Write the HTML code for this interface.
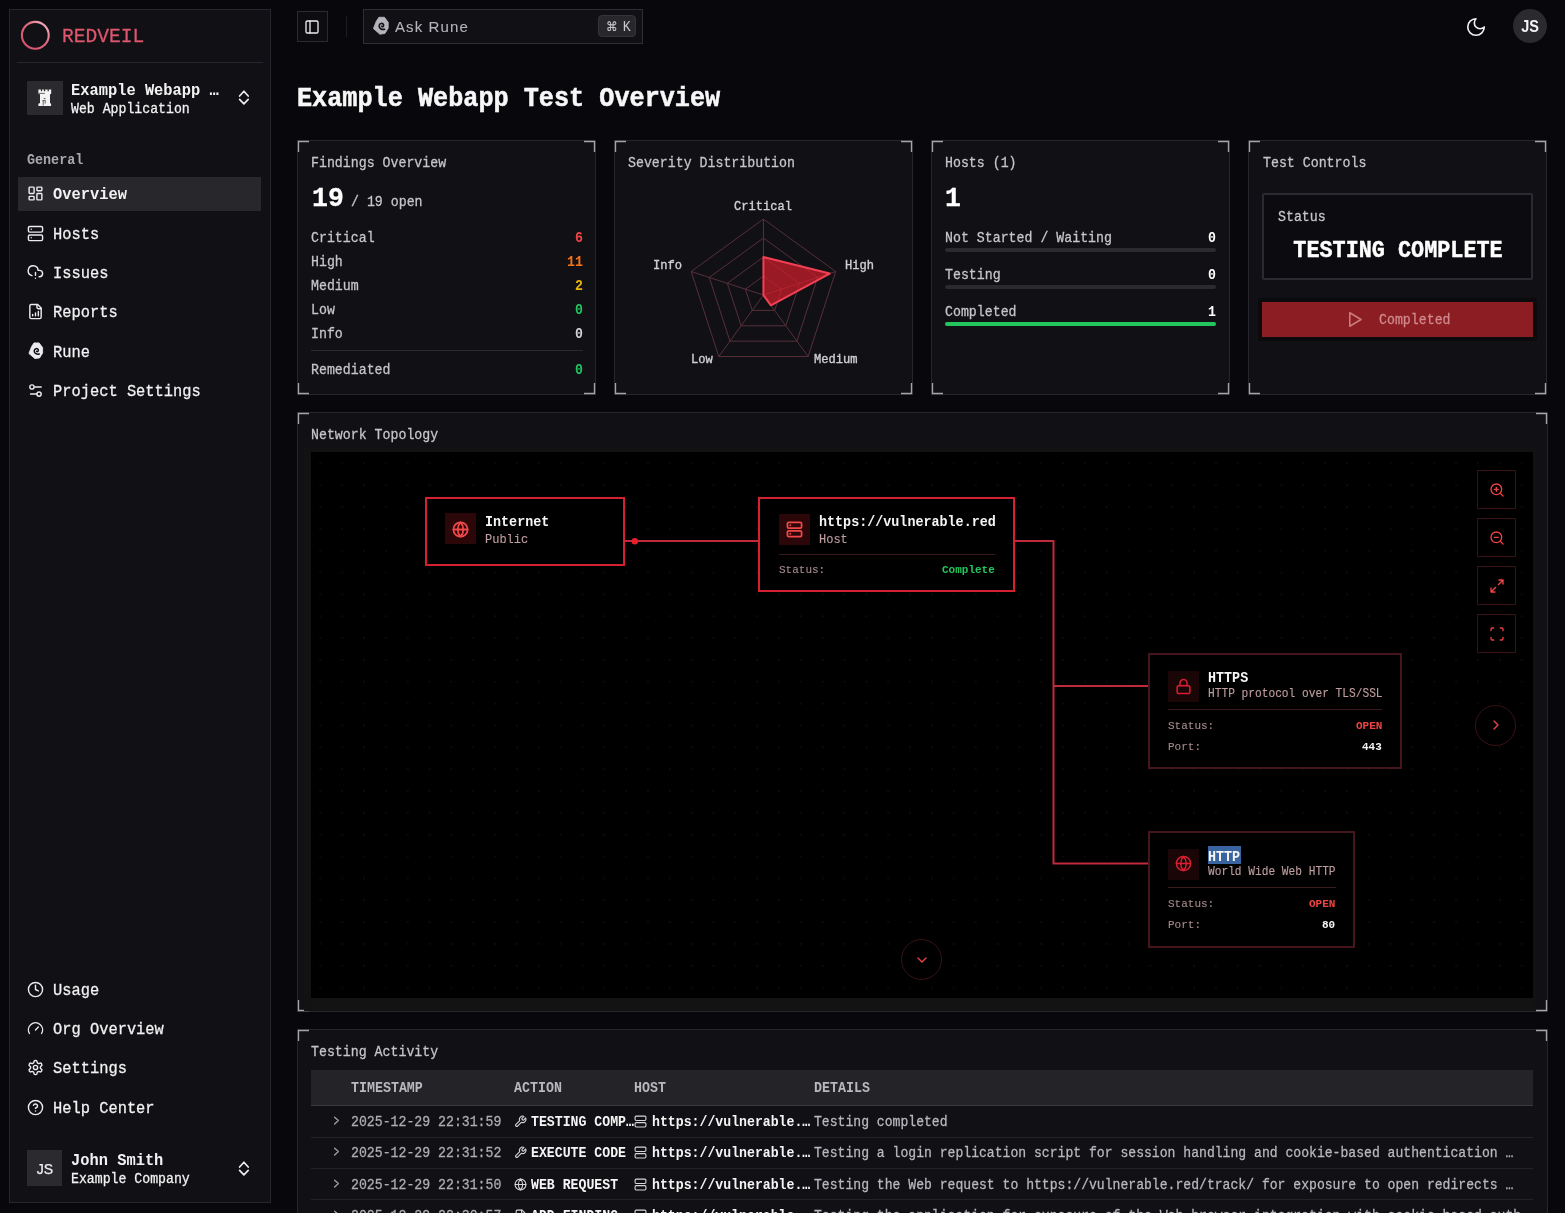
<!DOCTYPE html>
<html><head><meta charset="utf-8"><style>
html,body{margin:0;padding:0;}
body{width:1565px;height:1213px;background:#08080c;position:relative;overflow:hidden;}
.t{position:absolute;white-space:pre;will-change:transform;}
.b{position:absolute;}
</style></head><body>
<div class="b" style="left:9px;top:9px;width:262px;height:1194px;background:#111115;border:1px solid #26262c;box-sizing:border-box;"></div>
<svg class="b" style="left:19px;top:19px;" width="32" height="32" viewBox="0 0 32 32" fill="none"><defs><linearGradient id="lg" x1="0" y1="1" x2="1" y2="0"><stop offset="0" stop-color="#d84a64"/><stop offset="0.6" stop-color="#e06a80"/><stop offset="1" stop-color="#f4c8d0"/></linearGradient></defs><circle cx="16.3" cy="16.3" r="13.4" stroke="url(#lg)" stroke-width="2.1"/></svg>
<div class="t" style="top:25.28px;font-family:'Liberation Mono', monospace;font-size:19.6px;line-height:25px;color:#e0566e;font-weight:400;-webkit-text-stroke:0.25px #e0566e;transform:scaleY(1.07);transform-origin:0 17.72px;left:62px;">REDVEIL</div>
<div class="b" style="left:17px;top:62px;width:246px;height:1px;background:#26262c;"></div>
<div class="b" style="left:27px;top:81px;width:36px;height:34px;background:#2a2a2f;"></div>
<svg class="b" style="left:34px;top:86px;" width="22" height="22" viewBox="0 0 22 22" fill="none"><path d="M4.4 3.6H6.9V5.3H8.1V3.6H9.9V5.3H11.2V3.6H13.6V5.3H14.8V3.6H17.2V7.6L16 8.6V16.9L17.1 17.8V19.9H4.4V17.8L6 16.9V8.6L4.4 7.6Z" fill="#f4f4f5"/><path d="M5 7.4H10.8M9.6 12.6H11.6M8.4 14.6H11.8M9.2 14.6V19.5M11.2 15V17.6" stroke="#2a2a2f" stroke-width="0.7"/></svg>
<div class="t" style="top:80.90px;font-family:'Liberation Mono', monospace;font-size:15.4px;line-height:20px;color:#f2f2f3;font-weight:700;transform:scaleY(1.07);transform-origin:0 14.10px;left:71px;">Example Webapp …</div>
<div class="t" style="top:100.98px;font-family:'Liberation Mono', monospace;font-size:13.2px;line-height:17px;color:#f2f2f3;font-weight:400;-webkit-text-stroke:0.25px #f2f2f3;transform:scaleY(1.07);transform-origin:0 12.02px;left:71px;">Web Application</div>
<svg class="b" style="left:236px;top:88px;" width="16" height="18" viewBox="0 0 16 18" fill="none"><path d="M3.6 8L7.9 3.2L12.2 8M3.6 11.4L7.9 15.9L12.2 11.4" stroke="#ececee" stroke-width="1.7" stroke-linecap="round" stroke-linejoin="round"/></svg>
<div class="t" style="top:151.93px;font-family:'Liberation Mono', monospace;font-size:13.4px;line-height:17px;color:#a8a8ae;font-weight:700;transform:scaleY(1.07);transform-origin:0 12.07px;left:27px;">General</div>
<div class="b" style="left:18px;top:177px;width:243px;height:34px;background:#27272c;"></div>
<svg class="b" style="left:27px;top:184.5px;" width="17" height="17" viewBox="0 0 24 24" fill="none"><rect x="3" y="3" width="7" height="9" rx="1" stroke="#ececee" stroke-width="2" stroke-linecap="round" stroke-linejoin="round"/><rect x="14" y="3" width="7" height="5" rx="1" stroke="#ececee" stroke-width="2" stroke-linecap="round" stroke-linejoin="round"/><rect x="14" y="12" width="7" height="9" rx="1" stroke="#ececee" stroke-width="2" stroke-linecap="round" stroke-linejoin="round"/><rect x="3" y="16" width="7" height="5" rx="1" stroke="#ececee" stroke-width="2" stroke-linecap="round" stroke-linejoin="round"/></svg>
<div class="t" style="top:184.90px;font-family:'Liberation Mono', monospace;font-size:15.4px;line-height:20px;color:#f2f2f3;font-weight:700;transform:scaleY(1.07);transform-origin:0 14.10px;left:53px;">Overview</div>
<svg class="b" style="left:27px;top:224.8px;" width="17" height="17" viewBox="0 0 24 24" fill="none"><rect x="2" y="2" width="20" height="8" rx="2" stroke="#ececee" stroke-width="2" stroke-linecap="round" stroke-linejoin="round"/><rect x="2" y="14" width="20" height="8" rx="2" stroke="#ececee" stroke-width="2" stroke-linecap="round" stroke-linejoin="round"/><path d="M6 6h.01M6 18h.01" stroke="#ececee" stroke-width="2" stroke-linecap="round" stroke-linejoin="round"/></svg>
<div class="t" style="top:225.20px;font-family:'Liberation Mono', monospace;font-size:15.4px;line-height:20px;color:#f2f2f3;font-weight:400;-webkit-text-stroke:0.25px #f2f2f3;transform:scaleY(1.07);transform-origin:0 14.10px;left:53px;">Hosts</div>
<svg class="b" style="left:27px;top:263.5px;" width="17" height="17" viewBox="0 0 24 24" fill="none"><path d="M12 12v4M12 20h.01" stroke="#ececee" stroke-width="2" stroke-linecap="round" stroke-linejoin="round"/><path d="M17 18h.5a1 1 0 0 0 0-9h-1.79A7 7 0 1 0 7 16.33" stroke="#ececee" stroke-width="2" stroke-linecap="round" stroke-linejoin="round"/></svg>
<div class="t" style="top:263.90px;font-family:'Liberation Mono', monospace;font-size:15.4px;line-height:20px;color:#f2f2f3;font-weight:400;-webkit-text-stroke:0.25px #f2f2f3;transform:scaleY(1.07);transform-origin:0 14.10px;left:53px;">Issues</div>
<svg class="b" style="left:27px;top:302.5px;" width="17" height="17" viewBox="0 0 24 24" fill="none"><path d="M15 2H6a2 2 0 0 0-2 2v16a2 2 0 0 0 2 2h12a2 2 0 0 0 2-2V7z" stroke="#ececee" stroke-width="2" stroke-linecap="round" stroke-linejoin="round"/><path d="M14 2v4a2 2 0 0 0 2 2h4M8 18v-2M12 18v-4M16 18v-6" stroke="#ececee" stroke-width="2" stroke-linecap="round" stroke-linejoin="round"/></svg>
<div class="t" style="top:302.90px;font-family:'Liberation Mono', monospace;font-size:15.4px;line-height:20px;color:#f2f2f3;font-weight:400;-webkit-text-stroke:0.25px #f2f2f3;transform:scaleY(1.07);transform-origin:0 14.10px;left:53px;">Reports</div>
<svg class="b" style="left:22px;top:338px;" width="26" height="26" viewBox="0 0 26 26" fill="none"><path d="M12 4.9L17.1 4.9L20.6 9.6L20.6 15L17.6 19.9L12.9 20.6L6.9 15.4L9.6 8.6Z" fill="#ececee" stroke="#ececee" stroke-width="0.8" stroke-linejoin="round"/><path d="M17.3 16C15 16.6 12.2 15.6 12.2 13C12.2 10.4 15.6 9.8 16.3 11.9C16.7 13.3 15.2 14.1 14.5 13.3" stroke="#111115" stroke-width="1.5" stroke-linecap="round" fill="none"/></svg>
<div class="t" style="top:342.60px;font-family:'Liberation Mono', monospace;font-size:15.4px;line-height:20px;color:#f2f2f3;font-weight:400;-webkit-text-stroke:0.25px #f2f2f3;transform:scaleY(1.07);transform-origin:0 14.10px;left:53px;">Rune</div>
<svg class="b" style="left:27px;top:381.5px;" width="17" height="17" viewBox="0 0 24 24" fill="none"><path d="M20 7h-9M14 17H5" stroke="#ececee" stroke-width="2" stroke-linecap="round" stroke-linejoin="round"/><circle cx="17" cy="17" r="3" stroke="#ececee" stroke-width="2" stroke-linecap="round" stroke-linejoin="round"/><circle cx="7" cy="7" r="3" stroke="#ececee" stroke-width="2" stroke-linecap="round" stroke-linejoin="round"/></svg>
<div class="t" style="top:381.90px;font-family:'Liberation Mono', monospace;font-size:15.4px;line-height:20px;color:#f2f2f3;font-weight:400;-webkit-text-stroke:0.25px #f2f2f3;transform:scaleY(1.07);transform-origin:0 14.10px;left:53px;">Project Settings</div>
<svg class="b" style="left:27px;top:980.6px;" width="17" height="17" viewBox="0 0 24 24" fill="none"><circle cx="12" cy="12" r="10" stroke="#ececee" stroke-width="2" stroke-linecap="round" stroke-linejoin="round"/><path d="M12 6v6l4 2" stroke="#ececee" stroke-width="2" stroke-linecap="round" stroke-linejoin="round"/></svg>
<div class="t" style="top:981.00px;font-family:'Liberation Mono', monospace;font-size:15.4px;line-height:20px;color:#f2f2f3;font-weight:400;-webkit-text-stroke:0.25px #f2f2f3;transform:scaleY(1.07);transform-origin:0 14.10px;left:53px;">Usage</div>
<svg class="b" style="left:27px;top:1019.5999999999999px;" width="17" height="17" viewBox="0 0 24 24" fill="none"><path d="M12 14l4-4" stroke="#ececee" stroke-width="2" stroke-linecap="round" stroke-linejoin="round"/><path d="M3.34 19a10 10 0 1 1 17.32 0" stroke="#ececee" stroke-width="2" stroke-linecap="round" stroke-linejoin="round"/></svg>
<div class="t" style="top:1020.00px;font-family:'Liberation Mono', monospace;font-size:15.4px;line-height:20px;color:#f2f2f3;font-weight:400;-webkit-text-stroke:0.25px #f2f2f3;transform:scaleY(1.07);transform-origin:0 14.10px;left:53px;">Org Overview</div>
<svg class="b" style="left:27px;top:1058.6px;" width="17" height="17" viewBox="0 0 24 24" fill="none"><path d="M12.22 2h-.44a2 2 0 0 0-2 2v.18a2 2 0 0 1-1 1.73l-.43.25a2 2 0 0 1-2 0l-.15-.08a2 2 0 0 0-2.73.73l-.22.38a2 2 0 0 0 .73 2.73l.15.1a2 2 0 0 1 1 1.72v.51a2 2 0 0 1-1 1.74l-.15.09a2 2 0 0 0-.73 2.73l.22.38a2 2 0 0 0 2.73.73l.15-.08a2 2 0 0 1 2 0l.43.25a2 2 0 0 1 1 1.73V20a2 2 0 0 0 2 2h.44a2 2 0 0 0 2-2v-.18a2 2 0 0 1 1-1.73l.43-.25a2 2 0 0 1 2 0l.15.08a2 2 0 0 0 2.73-.73l.22-.39a2 2 0 0 0-.73-2.73l-.15-.08a2 2 0 0 1-1-1.74v-.5a2 2 0 0 1 1-1.74l.15-.09a2 2 0 0 0 .73-2.73l-.22-.38a2 2 0 0 0-2.73-.73l-.15.08a2 2 0 0 1-2 0l-.43-.25a2 2 0 0 1-1-1.73V4a2 2 0 0 0-2-2z" stroke="#ececee" stroke-width="2" stroke-linecap="round" stroke-linejoin="round"/><circle cx="12" cy="12" r="3" stroke="#ececee" stroke-width="2" stroke-linecap="round" stroke-linejoin="round"/></svg>
<div class="t" style="top:1059.00px;font-family:'Liberation Mono', monospace;font-size:15.4px;line-height:20px;color:#f2f2f3;font-weight:400;-webkit-text-stroke:0.25px #f2f2f3;transform:scaleY(1.07);transform-origin:0 14.10px;left:53px;">Settings</div>
<svg class="b" style="left:27px;top:1098.5px;" width="17" height="17" viewBox="0 0 24 24" fill="none"><circle cx="12" cy="12" r="10" stroke="#ececee" stroke-width="2" stroke-linecap="round" stroke-linejoin="round"/><path d="M9.09 9a3 3 0 0 1 5.83 1c0 2-3 3-3 3M12 17h.01" stroke="#ececee" stroke-width="2" stroke-linecap="round" stroke-linejoin="round"/></svg>
<div class="t" style="top:1098.90px;font-family:'Liberation Mono', monospace;font-size:15.4px;line-height:20px;color:#f2f2f3;font-weight:400;-webkit-text-stroke:0.25px #f2f2f3;transform:scaleY(1.07);transform-origin:0 14.10px;left:53px;">Help Center</div>
<div class="b" style="left:27px;top:1150px;width:35px;height:36px;background:#2a2a2f;"></div>
<div class="t" style="top:1160.15px;font-family:'Liberation Sans', sans-serif;font-size:14px;line-height:18px;color:#f0f0f2;font-weight:400;-webkit-text-stroke:0.25px #f0f0f2;left:-355.5px;width:800px;text-align:center;">JS</div>
<div class="t" style="top:1150.50px;font-family:'Liberation Mono', monospace;font-size:15.4px;line-height:20px;color:#f2f2f3;font-weight:700;transform:scaleY(1.07);transform-origin:0 14.10px;left:71px;">John Smith</div>
<div class="t" style="top:1170.98px;font-family:'Liberation Mono', monospace;font-size:13.2px;line-height:17px;color:#f2f2f3;font-weight:400;-webkit-text-stroke:0.25px #f2f2f3;transform:scaleY(1.07);transform-origin:0 12.02px;left:71px;">Example Company</div>
<svg class="b" style="left:236px;top:1159px;" width="16" height="18" viewBox="0 0 16 18" fill="none"><path d="M3.6 8L7.9 3.2L12.2 8M3.6 11.4L7.9 15.9L12.2 11.4" stroke="#ececee" stroke-width="1.7" stroke-linecap="round" stroke-linejoin="round"/></svg>
<div class="b" style="left:297px;top:11px;width:31px;height:31px;background:#0d0d11;border:1px solid #2a2a30;box-sizing:border-box;"></div>
<svg class="b" style="left:304px;top:19px;" width="16" height="16" viewBox="0 0 24 24" fill="none"><rect x="3" y="3" width="18" height="18" rx="2" stroke="#ececee" stroke-width="2" stroke-linecap="round" stroke-linejoin="round"/><path d="M9 3v18" stroke="#ececee" stroke-width="2" stroke-linecap="round" stroke-linejoin="round"/></svg>
<div class="b" style="left:346px;top:16px;width:1px;height:21px;background:#1c1c21;"></div>
<div class="b" style="left:363px;top:9px;width:280px;height:35px;background:#111115;border:1px solid #2e2e34;box-sizing:border-box;"></div>
<svg class="b" style="left:365.5px;top:12px;" width="28" height="28" viewBox="0 0 26 26" fill="none"><path d="M12 4.9L17.1 4.9L20.6 9.6L20.6 15L17.6 19.9L12.9 20.6L6.9 15.4L9.6 8.6Z" fill="#b4b4bc" stroke="#b4b4bc" stroke-width="0.8" stroke-linejoin="round"/><path d="M17.3 16C15 16.6 12.2 15.6 12.2 13C12.2 10.4 15.6 9.8 16.3 11.9C16.7 13.3 15.2 14.1 14.5 13.3" stroke="#111115" stroke-width="1.5" stroke-linecap="round" fill="none"/></svg>
<div class="t" style="top:16.80px;font-family:'Liberation Sans', sans-serif;font-size:15px;line-height:20px;color:#b4b4ba;font-weight:400;-webkit-text-stroke:0.1px #b4b4ba;letter-spacing:1.1px;left:395px;">Ask Rune</div>
<div class="b" style="left:598px;top:15px;width:38px;height:22px;background:#27272c;border:1px solid #34343a;box-sizing:border-box;border-radius:4px;"></div>
<div class="t" style="top:18.84px;font-family:'Liberation Sans', sans-serif;font-size:12px;line-height:16px;color:#c8c8cc;font-weight:400;-webkit-text-stroke:0.12px #c8c8cc;transform:scaleY(1.12);transform-origin:0 12.16px;left:211.70000000000005px;width:800px;text-align:center;">⌘</div>
<div class="t" style="top:19.52px;font-family:'Liberation Sans', sans-serif;font-size:11.5px;line-height:15px;color:#c8c8cc;font-weight:400;-webkit-text-stroke:0.12px #c8c8cc;transform:scaleY(1.2);transform-origin:0 11.48px;left:622.5px;">K</div>
<svg class="b" style="left:1464.5px;top:15.5px;" width="22" height="22" viewBox="0 0 24 24" fill="none"><path d="M12 3a6 6 0 0 0 9 9 9 9 0 1 1-9-9z" stroke="#f0f0f2" stroke-width="1.8" stroke-linecap="round" stroke-linejoin="round"/></svg>
<div class="b" style="left:1513px;top:9px;width:34px;height:34px;background:#2a2a2f;border-radius:17px;"></div>
<div class="t" style="top:17.68px;font-family:'Liberation Sans', sans-serif;font-size:14.5px;line-height:19px;color:#f4f4f5;font-weight:700;transform:scaleY(1.1);transform-origin:0 14.52px;left:1130px;width:800px;text-align:center;">JS</div>
<div class="t" style="top:82.78px;font-family:'Liberation Mono', monospace;font-size:25.2px;line-height:33px;color:#f7f7f8;font-weight:700;-webkit-text-stroke:0.5px #f7f7f8;transform:scaleY(1.09);transform-origin:0 23.22px;left:297px;">Example Webapp Test Overview</div>
<div class="b" style="left:297px;top:140px;width:299px;height:255px;background:#111115;border:1px solid #26262c;box-sizing:border-box;"></div>
<svg class="b" style="left:297px;top:140px;" width="299" height="255" viewBox="0 0 299 255" fill="none"><path d="M1.5 12V1.5H12" stroke="#a4a4a8" stroke-width="1.35" fill="none"/><path d="M287 1.5H297.5V12" stroke="#a4a4a8" stroke-width="1.35" fill="none"/><path d="M1.5 243V253.5H12" stroke="#a4a4a8" stroke-width="1.35" fill="none"/><path d="M287 253.5H297.5V243" stroke="#a4a4a8" stroke-width="1.35" fill="none"/></svg>
<div class="b" style="left:614px;top:140px;width:299px;height:255px;background:#111115;border:1px solid #26262c;box-sizing:border-box;"></div>
<svg class="b" style="left:614px;top:140px;" width="299" height="255" viewBox="0 0 299 255" fill="none"><path d="M1.5 12V1.5H12" stroke="#a4a4a8" stroke-width="1.35" fill="none"/><path d="M287 1.5H297.5V12" stroke="#a4a4a8" stroke-width="1.35" fill="none"/><path d="M1.5 243V253.5H12" stroke="#a4a4a8" stroke-width="1.35" fill="none"/><path d="M287 253.5H297.5V243" stroke="#a4a4a8" stroke-width="1.35" fill="none"/></svg>
<div class="b" style="left:931px;top:140px;width:299px;height:255px;background:#111115;border:1px solid #26262c;box-sizing:border-box;"></div>
<svg class="b" style="left:931px;top:140px;" width="299" height="255" viewBox="0 0 299 255" fill="none"><path d="M1.5 12V1.5H12" stroke="#a4a4a8" stroke-width="1.35" fill="none"/><path d="M287 1.5H297.5V12" stroke="#a4a4a8" stroke-width="1.35" fill="none"/><path d="M1.5 243V253.5H12" stroke="#a4a4a8" stroke-width="1.35" fill="none"/><path d="M287 253.5H297.5V243" stroke="#a4a4a8" stroke-width="1.35" fill="none"/></svg>
<div class="b" style="left:1248px;top:140px;width:299px;height:255px;background:#111115;border:1px solid #26262c;box-sizing:border-box;"></div>
<svg class="b" style="left:1248px;top:140px;" width="299" height="255" viewBox="0 0 299 255" fill="none"><path d="M1.5 12V1.5H12" stroke="#a4a4a8" stroke-width="1.35" fill="none"/><path d="M287 1.5H297.5V12" stroke="#a4a4a8" stroke-width="1.35" fill="none"/><path d="M1.5 243V253.5H12" stroke="#a4a4a8" stroke-width="1.35" fill="none"/><path d="M287 253.5H297.5V243" stroke="#a4a4a8" stroke-width="1.35" fill="none"/></svg>
<div class="t" style="top:154.67px;font-family:'Liberation Mono', monospace;font-size:13.25px;line-height:17px;color:#c6c6ca;font-weight:400;-webkit-text-stroke:0.25px #c6c6ca;transform:scaleY(1.07);transform-origin:0 12.03px;left:311px;">Findings Overview</div>
<div class="t" style="top:181.64px;font-family:'Liberation Mono', monospace;font-size:26.5px;line-height:34px;color:#ffffff;font-weight:700;-webkit-text-stroke:0.3px #ffffff;transform:scaleY(1.07);transform-origin:0 24.06px;left:312px;">19</div>
<div class="t" style="top:193.97px;font-family:'Liberation Mono', monospace;font-size:13.25px;line-height:17px;color:#c6c6ca;font-weight:400;-webkit-text-stroke:0.25px #c6c6ca;transform:scaleY(1.07);transform-origin:0 12.03px;left:351px;">/ 19 open</div>
<div class="t" style="top:229.67px;font-family:'Liberation Mono', monospace;font-size:13.25px;line-height:17px;color:#c6c6ca;font-weight:400;-webkit-text-stroke:0.25px #c6c6ca;transform:scaleY(1.07);transform-origin:0 12.03px;left:311px;">Critical</div>
<div class="t" style="top:229.67px;font-family:'Liberation Mono', monospace;font-size:13.25px;line-height:17px;color:#ef4444;font-weight:700;transform:scaleY(1.07);transform-origin:0 12.03px;right:982.5px;">6</div>
<div class="t" style="top:253.67px;font-family:'Liberation Mono', monospace;font-size:13.25px;line-height:17px;color:#c6c6ca;font-weight:400;-webkit-text-stroke:0.25px #c6c6ca;transform:scaleY(1.07);transform-origin:0 12.03px;left:311px;">High</div>
<div class="t" style="top:253.67px;font-family:'Liberation Mono', monospace;font-size:13.25px;line-height:17px;color:#f97316;font-weight:700;transform:scaleY(1.07);transform-origin:0 12.03px;right:982.5px;">11</div>
<div class="t" style="top:277.67px;font-family:'Liberation Mono', monospace;font-size:13.25px;line-height:17px;color:#c6c6ca;font-weight:400;-webkit-text-stroke:0.25px #c6c6ca;transform:scaleY(1.07);transform-origin:0 12.03px;left:311px;">Medium</div>
<div class="t" style="top:277.67px;font-family:'Liberation Mono', monospace;font-size:13.25px;line-height:17px;color:#eab308;font-weight:700;transform:scaleY(1.07);transform-origin:0 12.03px;right:982.5px;">2</div>
<div class="t" style="top:301.67px;font-family:'Liberation Mono', monospace;font-size:13.25px;line-height:17px;color:#c6c6ca;font-weight:400;-webkit-text-stroke:0.25px #c6c6ca;transform:scaleY(1.07);transform-origin:0 12.03px;left:311px;">Low</div>
<div class="t" style="top:301.67px;font-family:'Liberation Mono', monospace;font-size:13.25px;line-height:17px;color:#22c55e;font-weight:700;transform:scaleY(1.07);transform-origin:0 12.03px;right:982.5px;">0</div>
<div class="t" style="top:325.67px;font-family:'Liberation Mono', monospace;font-size:13.25px;line-height:17px;color:#c6c6ca;font-weight:400;-webkit-text-stroke:0.25px #c6c6ca;transform:scaleY(1.07);transform-origin:0 12.03px;left:311px;">Info</div>
<div class="t" style="top:325.67px;font-family:'Liberation Mono', monospace;font-size:13.25px;line-height:17px;color:#d4d4d8;font-weight:700;transform:scaleY(1.07);transform-origin:0 12.03px;right:982.5px;">0</div>
<div class="b" style="left:311px;top:350px;width:272px;height:1px;background:#2a2a30;"></div>
<div class="t" style="top:362.07px;font-family:'Liberation Mono', monospace;font-size:13.25px;line-height:17px;color:#c6c6ca;font-weight:400;-webkit-text-stroke:0.25px #c6c6ca;transform:scaleY(1.07);transform-origin:0 12.03px;left:311px;">Remediated</div>
<div class="t" style="top:362.07px;font-family:'Liberation Mono', monospace;font-size:13.25px;line-height:17px;color:#22c55e;font-weight:700;transform:scaleY(1.07);transform-origin:0 12.03px;right:982.5px;">0</div>
<div class="t" style="top:154.67px;font-family:'Liberation Mono', monospace;font-size:13.25px;line-height:17px;color:#c6c6ca;font-weight:400;-webkit-text-stroke:0.25px #c6c6ca;transform:scaleY(1.07);transform-origin:0 12.03px;left:628px;">Severity Distribution</div>
<svg class="b" style="left:614px;top:140px;" width="298" height="255" viewBox="0 0 298 255" fill="none"><polygon points="149.45,79.05 221.73,131.56 194.12,216.54 104.78,216.54 77.17,131.56" stroke="#573038" stroke-width="1"/><polygon points="149.45,98.05 203.66,137.44 182.95,201.16 115.95,201.16 95.24,137.44" stroke="#573038" stroke-width="1"/><polygon points="149.45,117.05 185.59,143.31 171.79,185.79 127.11,185.79 113.31,143.31" stroke="#573038" stroke-width="1"/><polygon points="149.45,136.05 167.52,149.18 160.62,170.42 138.28,170.42 131.38,149.18" stroke="#573038" stroke-width="1"/><line x1="149.45000000000005" y1="155.05" x2="149.45" y2="79.05" stroke="#573038" stroke-width="1"/><line x1="149.45000000000005" y1="155.05" x2="221.73" y2="131.56" stroke="#573038" stroke-width="1"/><line x1="149.45000000000005" y1="155.05" x2="194.12" y2="216.54" stroke="#573038" stroke-width="1"/><line x1="149.45000000000005" y1="155.05" x2="104.78" y2="216.54" stroke="#573038" stroke-width="1"/><line x1="149.45000000000005" y1="155.05" x2="77.17" y2="131.56" stroke="#573038" stroke-width="1"/><polygon points="149.45,117.05 215.71,133.52 156.90,165.30 149.45,155.05 149.45,155.05" fill="rgba(230,30,45,0.64)" stroke="#f43f55" stroke-width="2" stroke-linejoin="round"/></svg>
<div class="t" style="top:198.78px;font-family:'Liberation Mono', monospace;font-size:12.1px;line-height:16px;color:#d0d0d4;font-weight:400;-webkit-text-stroke:0.35px #d0d0d4;transform:scaleY(1.07);transform-origin:0 11.22px;left:363px;width:800px;text-align:center;">Critical</div>
<div class="t" style="top:257.78px;font-family:'Liberation Mono', monospace;font-size:12.1px;line-height:16px;color:#d0d0d4;font-weight:400;-webkit-text-stroke:0.35px #d0d0d4;transform:scaleY(1.07);transform-origin:0 11.22px;left:845px;">High</div>
<div class="t" style="top:352.38px;font-family:'Liberation Mono', monospace;font-size:12.1px;line-height:16px;color:#d0d0d4;font-weight:400;-webkit-text-stroke:0.35px #d0d0d4;transform:scaleY(1.07);transform-origin:0 11.22px;left:813.5px;">Medium</div>
<div class="t" style="top:352.38px;font-family:'Liberation Mono', monospace;font-size:12.1px;line-height:16px;color:#d0d0d4;font-weight:400;-webkit-text-stroke:0.35px #d0d0d4;transform:scaleY(1.07);transform-origin:0 11.22px;right:852px;">Low</div>
<div class="t" style="top:257.78px;font-family:'Liberation Mono', monospace;font-size:12.1px;line-height:16px;color:#d0d0d4;font-weight:400;-webkit-text-stroke:0.35px #d0d0d4;transform:scaleY(1.07);transform-origin:0 11.22px;right:882.5px;">Info</div>
<div class="t" style="top:154.67px;font-family:'Liberation Mono', monospace;font-size:13.25px;line-height:17px;color:#c6c6ca;font-weight:400;-webkit-text-stroke:0.25px #c6c6ca;transform:scaleY(1.07);transform-origin:0 12.03px;left:945px;">Hosts (1)</div>
<div class="t" style="top:181.64px;font-family:'Liberation Mono', monospace;font-size:26.5px;line-height:34px;color:#ffffff;font-weight:700;-webkit-text-stroke:0.3px #ffffff;transform:scaleY(1.07);transform-origin:0 24.06px;left:945px;">1</div>
<div class="t" style="top:230.37px;font-family:'Liberation Mono', monospace;font-size:13.25px;line-height:17px;color:#c6c6ca;font-weight:400;-webkit-text-stroke:0.25px #c6c6ca;transform:scaleY(1.07);transform-origin:0 12.03px;left:945px;">Not Started / Waiting</div>
<div class="t" style="top:230.37px;font-family:'Liberation Mono', monospace;font-size:13.25px;line-height:17px;color:#ffffff;font-weight:700;transform:scaleY(1.07);transform-origin:0 12.03px;right:349.5px;">0</div>
<div class="b" style="left:945px;top:248.4px;width:270.5px;height:4px;background:#2a2a2f;border-radius:2px;"></div>
<div class="t" style="top:267.07px;font-family:'Liberation Mono', monospace;font-size:13.25px;line-height:17px;color:#c6c6ca;font-weight:400;-webkit-text-stroke:0.25px #c6c6ca;transform:scaleY(1.07);transform-origin:0 12.03px;left:945px;">Testing</div>
<div class="t" style="top:267.07px;font-family:'Liberation Mono', monospace;font-size:13.25px;line-height:17px;color:#ffffff;font-weight:700;transform:scaleY(1.07);transform-origin:0 12.03px;right:349.5px;">0</div>
<div class="b" style="left:945px;top:285.1px;width:270.5px;height:4px;background:#2a2a2f;border-radius:2px;"></div>
<div class="t" style="top:303.77px;font-family:'Liberation Mono', monospace;font-size:13.25px;line-height:17px;color:#c6c6ca;font-weight:400;-webkit-text-stroke:0.25px #c6c6ca;transform:scaleY(1.07);transform-origin:0 12.03px;left:945px;">Completed</div>
<div class="t" style="top:303.77px;font-family:'Liberation Mono', monospace;font-size:13.25px;line-height:17px;color:#ffffff;font-weight:700;transform:scaleY(1.07);transform-origin:0 12.03px;right:349.5px;">1</div>
<div class="b" style="left:945px;top:321.8px;width:270.5px;height:4px;background:#2a2a2f;border-radius:2px;"></div>
<div class="b" style="left:945px;top:321.8px;width:270.5px;height:4px;background:#22c55e;border-radius:2px;"></div>
<div class="t" style="top:154.67px;font-family:'Liberation Mono', monospace;font-size:13.25px;line-height:17px;color:#c6c6ca;font-weight:400;-webkit-text-stroke:0.25px #c6c6ca;transform:scaleY(1.07);transform-origin:0 12.03px;left:1262.5px;">Test Controls</div>
<div class="b" style="left:1262px;top:193px;width:271px;height:87px;background:#0c0c10;border:2px solid #2a2a30;box-sizing:border-box;border-radius:2px;"></div>
<div class="t" style="top:208.77px;font-family:'Liberation Mono', monospace;font-size:13.25px;line-height:17px;color:#c6c6ca;font-weight:400;-webkit-text-stroke:0.25px #c6c6ca;transform:scaleY(1.07);transform-origin:0 12.03px;left:1277.5px;">Status</div>
<div class="t" style="top:237.59px;font-family:'Liberation Mono', monospace;font-size:21.8px;line-height:28px;color:#ffffff;font-weight:700;-webkit-text-stroke:0.4px #ffffff;transform:scaleY(1.07);transform-origin:0 19.81px;left:997.5px;width:800px;text-align:center;">TESTING COMPLETE</div>
<div class="b" style="left:1262px;top:301.5px;width:271px;height:35px;background:#8b1d23;box-shadow:0 0 0 4px #0b0b0e;"></div>
<svg class="b" style="left:1348px;top:311px;" width="15" height="17" viewBox="0 0 15 17" fill="none"><path d="M1.8 1.8L13 8.5L1.8 15.2Z" stroke="#cc7b7f" stroke-width="1.6" stroke-linejoin="round"/></svg>
<div class="t" style="top:312.07px;font-family:'Liberation Mono', monospace;font-size:13.25px;line-height:17px;color:#d08a8d;font-weight:400;-webkit-text-stroke:0.25px #d08a8d;transform:scaleY(1.07);transform-origin:0 12.03px;left:1379px;">Completed</div>
<div class="b" style="left:297px;top:412px;width:1251px;height:600px;background:#111115;border:1px solid #26262c;box-sizing:border-box;"></div>
<svg class="b" style="left:297px;top:412px;" width="1251" height="600" viewBox="0 0 1251 600" fill="none"><path d="M1.5 12V1.5H12" stroke="#a4a4a8" stroke-width="1.35" fill="none"/><path d="M1239 1.5H1249.5V12" stroke="#a4a4a8" stroke-width="1.35" fill="none"/><path d="M1.5 588V598.5H12" stroke="#a4a4a8" stroke-width="1.35" fill="none"/><path d="M1239 598.5H1249.5V588" stroke="#a4a4a8" stroke-width="1.35" fill="none"/></svg>
<div class="t" style="top:426.97px;font-family:'Liberation Mono', monospace;font-size:13.25px;line-height:17px;color:#c6c6ca;font-weight:400;-webkit-text-stroke:0.25px #c6c6ca;transform:scaleY(1.07);transform-origin:0 12.03px;left:310.5px;">Network Topology</div>
<div class="b" style="left:303.5px;top:447.5px;width:1232px;height:563px;background:#121212;"></div>
<div class="b" style="left:311px;top:452px;width:1222px;height:546px;background:#000000;background-image:radial-gradient(circle, #0b0b0d 0.9px, transparent 1.3px);background-size:21.85px 21.85px;background-position:-1.6px 0.4px;"></div>
<div class="b" style="left:311px;top:998px;width:1222px;height:12px;background:#131313;"></div>
<svg class="b" style="left:0px;top:0px;pointer-events:none;" width="1565" height="1213" viewBox="0 0 1565 1213" fill="none"><path d="M625 541H758" stroke="#bf2a3c" stroke-width="2"/><circle cx="634.8" cy="541.2" r="3.2" fill="#e8202e"/><path d="M1015 541H1053.5V863.5H1149M1053.5 686H1149" stroke="#bf2a3c" stroke-width="2" fill="none"/></svg>
<div class="b" style="left:425px;top:497px;width:200px;height:69px;background:#000;border:2px solid #d42030;box-sizing:border-box;"></div>
<div class="b" style="left:445px;top:513px;width:31px;height:31px;background:#2c070a;"></div>
<svg class="b" style="left:452px;top:520.5px;" width="17" height="17" viewBox="0 0 24 24" fill="none"><circle cx="12" cy="12" r="10" stroke="#f04848" stroke-width="2.5" stroke-linecap="round" stroke-linejoin="round"/><path d="M12 2a14.5 14.5 0 0 0 0 20 14.5 14.5 0 0 0 0-20M2 12h20" stroke="#f04848" stroke-width="2.5" stroke-linecap="round" stroke-linejoin="round"/></svg>
<div class="t" style="top:514.03px;font-family:'Liberation Mono', monospace;font-size:13.4px;line-height:17px;color:#f5f5f5;font-weight:700;transform:scaleY(1.07);transform-origin:0 12.07px;left:484.5px;">Internet</div>
<div class="t" style="top:531.80px;font-family:'Liberation Mono', monospace;font-size:12px;line-height:16px;color:#bf9ea0;font-weight:400;-webkit-text-stroke:0.12px #bf9ea0;transform:scaleY(1.07);transform-origin:0 11.20px;left:484.5px;">Public</div>
<div class="b" style="left:758px;top:497px;width:257px;height:95px;background:#000;border:2px solid #d42030;box-sizing:border-box;"></div>
<div class="b" style="left:778.5px;top:513.5px;width:31px;height:31px;background:#2c070a;"></div>
<svg class="b" style="left:785.5px;top:520.5px;" width="17" height="17" viewBox="0 0 24 24" fill="none"><rect x="2" y="2" width="20" height="8" rx="2" stroke="#f04848" stroke-width="2.5" stroke-linecap="round" stroke-linejoin="round"/><rect x="2" y="14" width="20" height="8" rx="2" stroke="#f04848" stroke-width="2.5" stroke-linecap="round" stroke-linejoin="round"/><path d="M6 6h.01M6 18h.01" stroke="#f04848" stroke-width="2.5" stroke-linecap="round" stroke-linejoin="round"/></svg>
<div class="t" style="top:513.93px;font-family:'Liberation Mono', monospace;font-size:13.4px;line-height:17px;color:#f5f5f5;font-weight:700;transform:scaleY(1.07);transform-origin:0 12.07px;left:819px;">https://vulnerable.red</div>
<div class="t" style="top:532.10px;font-family:'Liberation Mono', monospace;font-size:12px;line-height:16px;color:#bf9ea0;font-weight:400;-webkit-text-stroke:0.12px #bf9ea0;transform:scaleY(1.07);transform-origin:0 11.20px;left:819px;">Host</div>
<div class="b" style="left:778.5px;top:554px;width:216px;height:1px;background:#3a1a1d;"></div>
<div class="t" style="top:563.07px;font-family:'Liberation Mono', monospace;font-size:11px;line-height:14px;color:#a68a8c;font-weight:400;-webkit-text-stroke:0.12px #a68a8c;transform:scaleY(1.07);transform-origin:0 9.93px;left:778.5px;">Status:</div>
<div class="t" style="top:563.07px;font-family:'Liberation Mono', monospace;font-size:11px;line-height:14px;color:#22c55e;font-weight:700;transform:scaleY(1.07);transform-origin:0 9.93px;right:570px;">Complete</div>
<div class="b" style="left:1148px;top:653px;width:254px;height:116px;background:#000;border:2px solid #45171d;box-sizing:border-box;"></div>
<div class="b" style="left:1168px;top:671px;width:31px;height:31px;background:#1a0507;"></div>
<svg class="b" style="left:1174.5px;top:677.5px;" width="17" height="17" viewBox="0 0 24 24" fill="none"><rect x="3" y="11" width="18" height="11" rx="2" stroke="#dc1f30" stroke-width="2.1" stroke-linecap="round" stroke-linejoin="round"/><path d="M7 11V7a5 5 0 0 1 10 0v4" stroke="#dc1f30" stroke-width="2.1" stroke-linecap="round" stroke-linejoin="round"/></svg>
<div class="t" style="top:669.93px;font-family:'Liberation Mono', monospace;font-size:13.4px;line-height:17px;color:#f5f5f5;font-weight:700;transform:scaleY(1.07);transform-origin:0 12.07px;left:1207.5px;">HTTPS</div>
<div class="t" style="top:687.22px;font-family:'Liberation Mono', monospace;font-size:11.2px;line-height:15px;color:#bf9ea0;font-weight:400;-webkit-text-stroke:0.12px #bf9ea0;transform:scaleY(1.07);transform-origin:0 10.48px;left:1207.5px;">HTTP protocol over TLS/SSL</div>
<div class="b" style="left:1168px;top:709px;width:214px;height:1px;background:#3a1a1d;"></div>
<div class="t" style="top:718.97px;font-family:'Liberation Mono', monospace;font-size:11px;line-height:14px;color:#a68a8c;font-weight:400;-webkit-text-stroke:0.12px #a68a8c;transform:scaleY(1.07);transform-origin:0 9.93px;left:1168px;">Status:</div>
<div class="t" style="top:718.97px;font-family:'Liberation Mono', monospace;font-size:11px;line-height:14px;color:#ef4444;font-weight:700;transform:scaleY(1.07);transform-origin:0 9.93px;right:183px;">OPEN</div>
<div class="t" style="top:740.07px;font-family:'Liberation Mono', monospace;font-size:11px;line-height:14px;color:#a68a8c;font-weight:400;-webkit-text-stroke:0.12px #a68a8c;transform:scaleY(1.07);transform-origin:0 9.93px;left:1168px;">Port:</div>
<div class="t" style="top:740.07px;font-family:'Liberation Mono', monospace;font-size:11px;line-height:14px;color:#f5f5f5;font-weight:700;transform:scaleY(1.07);transform-origin:0 9.93px;right:183px;">443</div>
<div class="b" style="left:1148px;top:831px;width:207px;height:117px;background:#000;border:2px solid #45171d;box-sizing:border-box;"></div>
<div class="b" style="left:1168px;top:848.5px;width:31px;height:31px;background:#1a0507;"></div>
<svg class="b" style="left:1174.5px;top:855px;" width="17" height="17" viewBox="0 0 24 24" fill="none"><circle cx="12" cy="12" r="10" stroke="#dc1f30" stroke-width="2.1" stroke-linecap="round" stroke-linejoin="round"/><path d="M12 2a14.5 14.5 0 0 0 0 20 14.5 14.5 0 0 0 0-20M2 12h20" stroke="#dc1f30" stroke-width="2.1" stroke-linecap="round" stroke-linejoin="round"/></svg>
<div class="b" style="left:1207.5px;top:846.3px;width:33px;height:17.5px;background:#3a64a0;"></div>
<div class="t" style="top:849.33px;font-family:'Liberation Mono', monospace;font-size:13.4px;line-height:17px;color:#f5f5f5;font-weight:700;transform:scaleY(1.07);transform-origin:0 12.07px;left:1207.5px;">HTTP</div>
<div class="t" style="top:865.32px;font-family:'Liberation Mono', monospace;font-size:11.2px;line-height:15px;color:#bf9ea0;font-weight:400;-webkit-text-stroke:0.12px #bf9ea0;transform:scaleY(1.07);transform-origin:0 10.48px;left:1207.5px;">World Wide Web HTTP</div>
<div class="b" style="left:1168px;top:887px;width:168px;height:1px;background:#3a1a1d;"></div>
<div class="t" style="top:896.77px;font-family:'Liberation Mono', monospace;font-size:11px;line-height:14px;color:#a68a8c;font-weight:400;-webkit-text-stroke:0.12px #a68a8c;transform:scaleY(1.07);transform-origin:0 9.93px;left:1168px;">Status:</div>
<div class="t" style="top:896.77px;font-family:'Liberation Mono', monospace;font-size:11px;line-height:14px;color:#ef4444;font-weight:700;transform:scaleY(1.07);transform-origin:0 9.93px;right:230px;">OPEN</div>
<div class="t" style="top:917.87px;font-family:'Liberation Mono', monospace;font-size:11px;line-height:14px;color:#a68a8c;font-weight:400;-webkit-text-stroke:0.12px #a68a8c;transform:scaleY(1.07);transform-origin:0 9.93px;left:1168px;">Port:</div>
<div class="t" style="top:917.87px;font-family:'Liberation Mono', monospace;font-size:11px;line-height:14px;color:#f5f5f5;font-weight:700;transform:scaleY(1.07);transform-origin:0 9.93px;right:230px;">80</div>
<div class="b" style="left:1477px;top:470px;width:39px;height:39px;background:#000;border:1px solid #3a1215;box-sizing:border-box;"></div>
<svg class="b" style="left:1488.5px;top:481.5px;" width="16" height="16" viewBox="0 0 24 24" fill="none"><circle cx="11" cy="11" r="8" stroke="#ef4444" stroke-width="2" stroke-linecap="round" stroke-linejoin="round"/><path d="M21 21l-4.3-4.3M11 8v6M8 11h6" stroke="#ef4444" stroke-width="2" stroke-linecap="round" stroke-linejoin="round"/></svg>
<div class="b" style="left:1477px;top:518px;width:39px;height:39px;background:#000;border:1px solid #3a1215;box-sizing:border-box;"></div>
<svg class="b" style="left:1488.5px;top:529.5px;" width="16" height="16" viewBox="0 0 24 24" fill="none"><circle cx="11" cy="11" r="8" stroke="#ef4444" stroke-width="2" stroke-linecap="round" stroke-linejoin="round"/><path d="M21 21l-4.3-4.3M8 11h6" stroke="#ef4444" stroke-width="2" stroke-linecap="round" stroke-linejoin="round"/></svg>
<div class="b" style="left:1477px;top:566px;width:39px;height:39px;background:#000;border:1px solid #3a1215;box-sizing:border-box;"></div>
<svg class="b" style="left:1488.5px;top:577.5px;" width="16" height="16" viewBox="0 0 24 24" fill="none"><path d="M15 3h6v6M9 21H3v-6M21 3l-7 7M3 21l7-7" stroke="#ef4444" stroke-width="2" stroke-linecap="round" stroke-linejoin="round"/></svg>
<div class="b" style="left:1477px;top:614px;width:39px;height:39px;background:#000;border:1px solid #3a1215;box-sizing:border-box;"></div>
<svg class="b" style="left:1488.5px;top:625.5px;" width="16" height="16" viewBox="0 0 24 24" fill="none"><path d="M3 7V5a2 2 0 0 1 2-2h2M17 3h2a2 2 0 0 1 2 2v2M21 17v2a2 2 0 0 1-2 2h-2M7 21H5a2 2 0 0 1-2-2v-2" stroke="#ef4444" stroke-width="2" stroke-linecap="round" stroke-linejoin="round"/></svg>
<div class="b" style="left:1475px;top:704.5px;width:41px;height:41px;background:#000;border:1px solid #3a1215;box-sizing:border-box;border-radius:21px;"></div>
<svg class="b" style="left:1487.5px;top:717px;" width="16" height="16" viewBox="0 0 24 24" fill="none"><path d="M9 18l6-6-6-6" stroke="#ef4444" stroke-width="2" stroke-linecap="round" stroke-linejoin="round"/></svg>
<div class="b" style="left:901px;top:939px;width:41px;height:41px;background:#000;border:1px solid #3a1215;box-sizing:border-box;border-radius:21px;"></div>
<svg class="b" style="left:913.5px;top:951.5px;" width="16" height="16" viewBox="0 0 24 24" fill="none"><path d="M6 9l6 6 6-6" stroke="#ef4444" stroke-width="2" stroke-linecap="round" stroke-linejoin="round"/></svg>
<div class="b" style="left:297px;top:1029px;width:1251px;height:200px;background:#111115;border:1px solid #26262c;box-sizing:border-box;"></div>
<svg class="b" style="left:297px;top:1029px;" width="1251" height="200" viewBox="0 0 1251 200" fill="none"><path d="M1.5 12V1.5H12" stroke="#a4a4a8" stroke-width="1.35" fill="none"/><path d="M1239 1.5H1249.5V12" stroke="#a4a4a8" stroke-width="1.35" fill="none"/><path d="M1.5 188V198.5H12" stroke="#a4a4a8" stroke-width="1.35" fill="none"/><path d="M1239 198.5H1249.5V188" stroke="#a4a4a8" stroke-width="1.35" fill="none"/></svg>
<div class="t" style="top:1044.37px;font-family:'Liberation Mono', monospace;font-size:13.25px;line-height:17px;color:#c6c6ca;font-weight:400;-webkit-text-stroke:0.25px #c6c6ca;transform:scaleY(1.07);transform-origin:0 12.03px;left:311px;">Testing Activity</div>
<div class="b" style="left:311px;top:1070px;width:1222px;height:36px;background:#242428;border-bottom:1px solid #3a3a40;box-sizing:border-box;"></div>
<div class="t" style="top:1080.16px;font-family:'Liberation Mono', monospace;font-size:13.3px;line-height:17px;color:#b8b8be;font-weight:700;transform:scaleY(1.07);transform-origin:0 12.04px;left:350.5px;">TIMESTAMP</div>
<div class="t" style="top:1080.16px;font-family:'Liberation Mono', monospace;font-size:13.3px;line-height:17px;color:#b8b8be;font-weight:700;transform:scaleY(1.07);transform-origin:0 12.04px;left:514px;">ACTION</div>
<div class="t" style="top:1080.16px;font-family:'Liberation Mono', monospace;font-size:13.3px;line-height:17px;color:#b8b8be;font-weight:700;transform:scaleY(1.07);transform-origin:0 12.04px;left:633.5px;">HOST</div>
<div class="t" style="top:1080.16px;font-family:'Liberation Mono', monospace;font-size:13.3px;line-height:17px;color:#b8b8be;font-weight:700;transform:scaleY(1.07);transform-origin:0 12.04px;left:814px;">DETAILS</div>
<div class="b" style="left:311px;top:1137px;width:1222px;height:1px;background:#232328;"></div>
<div class="b" style="left:311px;top:1168px;width:1222px;height:1px;background:#232328;"></div>
<div class="b" style="left:311px;top:1199px;width:1222px;height:1px;background:#232328;"></div>
<svg class="b" style="left:331px;top:1116.1px;" width="10" height="10" viewBox="0 0 10 10" fill="none"><path d="M3.6 1.2L7.4 4.6L3.6 8" stroke="#a0a0a6" stroke-width="1.3" stroke-linecap="round" stroke-linejoin="round"/></svg>
<div class="t" style="top:1114.08px;font-family:'Liberation Mono', monospace;font-size:13.2px;line-height:17px;color:#adadb2;font-weight:400;-webkit-text-stroke:0.25px #adadb2;transform:scaleY(1.07);transform-origin:0 12.02px;left:350.5px;">2025-12-29 22:31:59</div>
<svg class="b" style="left:514px;top:1115.1px;" width="13" height="13" viewBox="0 0 24 24" fill="none"><path d="M14.7 6.3a1 1 0 0 0 0 1.4l1.6 1.6a1 1 0 0 0 1.4 0l3.77-3.77a6 6 0 0 1-7.94 7.94l-6.91 6.91a2.12 2.12 0 0 1-3-3l6.91-6.91a6 6 0 0 1 7.94-7.94l-3.76 3.76z" stroke="#d8d8dc" stroke-width="2" stroke-linecap="round" stroke-linejoin="round"/></svg>
<div class="t" style="top:1114.08px;font-family:'Liberation Mono', monospace;font-size:13.2px;line-height:17px;color:#f5f5f5;font-weight:700;transform:scaleY(1.07);transform-origin:0 12.02px;left:531px;">TESTING COMP…</div>
<svg class="b" style="left:633.5px;top:1115.1px;" width="13" height="13" viewBox="0 0 24 24" fill="none"><rect x="2" y="2" width="20" height="8" rx="2" stroke="#d8d8dc" stroke-width="2" stroke-linecap="round" stroke-linejoin="round"/><rect x="2" y="14" width="20" height="8" rx="2" stroke="#d8d8dc" stroke-width="2" stroke-linecap="round" stroke-linejoin="round"/></svg>
<div class="t" style="top:1114.08px;font-family:'Liberation Mono', monospace;font-size:13.2px;line-height:17px;color:#f5f5f5;font-weight:700;transform:scaleY(1.07);transform-origin:0 12.02px;left:651.5px;">https://vulnerable.…</div>
<div class="t" style="top:1114.11px;font-family:'Liberation Mono', monospace;font-size:13.1px;line-height:17px;color:#b8b8be;font-weight:400;-webkit-text-stroke:0.25px #b8b8be;transform:scaleY(1.07);transform-origin:0 11.99px;left:814px;">Testing completed</div>
<svg class="b" style="left:331px;top:1146.8px;" width="10" height="10" viewBox="0 0 10 10" fill="none"><path d="M3.6 1.2L7.4 4.6L3.6 8" stroke="#a0a0a6" stroke-width="1.3" stroke-linecap="round" stroke-linejoin="round"/></svg>
<div class="t" style="top:1144.78px;font-family:'Liberation Mono', monospace;font-size:13.2px;line-height:17px;color:#adadb2;font-weight:400;-webkit-text-stroke:0.25px #adadb2;transform:scaleY(1.07);transform-origin:0 12.02px;left:350.5px;">2025-12-29 22:31:52</div>
<svg class="b" style="left:514px;top:1145.8px;" width="13" height="13" viewBox="0 0 24 24" fill="none"><path d="M14.7 6.3a1 1 0 0 0 0 1.4l1.6 1.6a1 1 0 0 0 1.4 0l3.77-3.77a6 6 0 0 1-7.94 7.94l-6.91 6.91a2.12 2.12 0 0 1-3-3l6.91-6.91a6 6 0 0 1 7.94-7.94l-3.76 3.76z" stroke="#d8d8dc" stroke-width="2" stroke-linecap="round" stroke-linejoin="round"/></svg>
<div class="t" style="top:1144.78px;font-family:'Liberation Mono', monospace;font-size:13.2px;line-height:17px;color:#f5f5f5;font-weight:700;transform:scaleY(1.07);transform-origin:0 12.02px;left:531px;">EXECUTE CODE</div>
<svg class="b" style="left:633.5px;top:1145.8px;" width="13" height="13" viewBox="0 0 24 24" fill="none"><rect x="2" y="2" width="20" height="8" rx="2" stroke="#d8d8dc" stroke-width="2" stroke-linecap="round" stroke-linejoin="round"/><rect x="2" y="14" width="20" height="8" rx="2" stroke="#d8d8dc" stroke-width="2" stroke-linecap="round" stroke-linejoin="round"/></svg>
<div class="t" style="top:1144.78px;font-family:'Liberation Mono', monospace;font-size:13.2px;line-height:17px;color:#f5f5f5;font-weight:700;transform:scaleY(1.07);transform-origin:0 12.02px;left:651.5px;">https://vulnerable.…</div>
<div class="t" style="top:1144.81px;font-family:'Liberation Mono', monospace;font-size:13.1px;line-height:17px;color:#b8b8be;font-weight:400;-webkit-text-stroke:0.25px #b8b8be;transform:scaleY(1.07);transform-origin:0 11.99px;left:814px;">Testing a login replication script for session handling and cookie-based authentication …</div>
<svg class="b" style="left:331px;top:1178.7px;" width="10" height="10" viewBox="0 0 10 10" fill="none"><path d="M3.6 1.2L7.4 4.6L3.6 8" stroke="#a0a0a6" stroke-width="1.3" stroke-linecap="round" stroke-linejoin="round"/></svg>
<div class="t" style="top:1176.68px;font-family:'Liberation Mono', monospace;font-size:13.2px;line-height:17px;color:#adadb2;font-weight:400;-webkit-text-stroke:0.25px #adadb2;transform:scaleY(1.07);transform-origin:0 12.02px;left:350.5px;">2025-12-29 22:31:50</div>
<svg class="b" style="left:514px;top:1177.7px;" width="13" height="13" viewBox="0 0 24 24" fill="none"><circle cx="12" cy="12" r="10" stroke="#d8d8dc" stroke-width="2" stroke-linecap="round" stroke-linejoin="round"/><path d="M12 2a14.5 14.5 0 0 0 0 20 14.5 14.5 0 0 0 0-20M2 12h20" stroke="#d8d8dc" stroke-width="2" stroke-linecap="round" stroke-linejoin="round"/></svg>
<div class="t" style="top:1176.68px;font-family:'Liberation Mono', monospace;font-size:13.2px;line-height:17px;color:#f5f5f5;font-weight:700;transform:scaleY(1.07);transform-origin:0 12.02px;left:531px;">WEB REQUEST</div>
<svg class="b" style="left:633.5px;top:1177.7px;" width="13" height="13" viewBox="0 0 24 24" fill="none"><rect x="2" y="2" width="20" height="8" rx="2" stroke="#d8d8dc" stroke-width="2" stroke-linecap="round" stroke-linejoin="round"/><rect x="2" y="14" width="20" height="8" rx="2" stroke="#d8d8dc" stroke-width="2" stroke-linecap="round" stroke-linejoin="round"/></svg>
<div class="t" style="top:1176.68px;font-family:'Liberation Mono', monospace;font-size:13.2px;line-height:17px;color:#f5f5f5;font-weight:700;transform:scaleY(1.07);transform-origin:0 12.02px;left:651.5px;">https://vulnerable.…</div>
<div class="t" style="top:1176.71px;font-family:'Liberation Mono', monospace;font-size:13.1px;line-height:17px;color:#b8b8be;font-weight:400;-webkit-text-stroke:0.25px #b8b8be;transform:scaleY(1.07);transform-origin:0 11.99px;left:814px;">Testing the Web request to https://vulnerable.red/track/ for exposure to open redirects …</div>
<svg class="b" style="left:331px;top:1210px;" width="10" height="10" viewBox="0 0 10 10" fill="none"><path d="M3.6 1.2L7.4 4.6L3.6 8" stroke="#a0a0a6" stroke-width="1.3" stroke-linecap="round" stroke-linejoin="round"/></svg>
<div class="t" style="top:1207.98px;font-family:'Liberation Mono', monospace;font-size:13.2px;line-height:17px;color:#adadb2;font-weight:400;-webkit-text-stroke:0.25px #adadb2;transform:scaleY(1.07);transform-origin:0 12.02px;left:350.5px;">2025-12-29 22:30:57</div>
<svg class="b" style="left:514px;top:1209px;" width="13" height="13" viewBox="0 0 24 24" fill="none"><path d="M15 2H6a2 2 0 0 0-2 2v16a2 2 0 0 0 2 2h12a2 2 0 0 0 2-2V7z" stroke="#d8d8dc" stroke-width="2" stroke-linecap="round" stroke-linejoin="round"/><path d="M14 2v4a2 2 0 0 0 2 2h4" stroke="#d8d8dc" stroke-width="2" stroke-linecap="round" stroke-linejoin="round"/></svg>
<div class="t" style="top:1207.98px;font-family:'Liberation Mono', monospace;font-size:13.2px;line-height:17px;color:#f5f5f5;font-weight:700;transform:scaleY(1.07);transform-origin:0 12.02px;left:531px;">ADD FINDING</div>
<svg class="b" style="left:633.5px;top:1209px;" width="13" height="13" viewBox="0 0 24 24" fill="none"><rect x="2" y="2" width="20" height="8" rx="2" stroke="#d8d8dc" stroke-width="2" stroke-linecap="round" stroke-linejoin="round"/><rect x="2" y="14" width="20" height="8" rx="2" stroke="#d8d8dc" stroke-width="2" stroke-linecap="round" stroke-linejoin="round"/></svg>
<div class="t" style="top:1207.98px;font-family:'Liberation Mono', monospace;font-size:13.2px;line-height:17px;color:#f5f5f5;font-weight:700;transform:scaleY(1.07);transform-origin:0 12.02px;left:651.5px;">https://vulnerable.…</div>
<div class="t" style="top:1208.01px;font-family:'Liberation Mono', monospace;font-size:13.1px;line-height:17px;color:#b8b8be;font-weight:400;-webkit-text-stroke:0.25px #b8b8be;transform:scaleY(1.07);transform-origin:0 11.99px;left:814px;">Testing the application for exposure of the Web browser integration with cookie-based auth …</div>
</body></html>
